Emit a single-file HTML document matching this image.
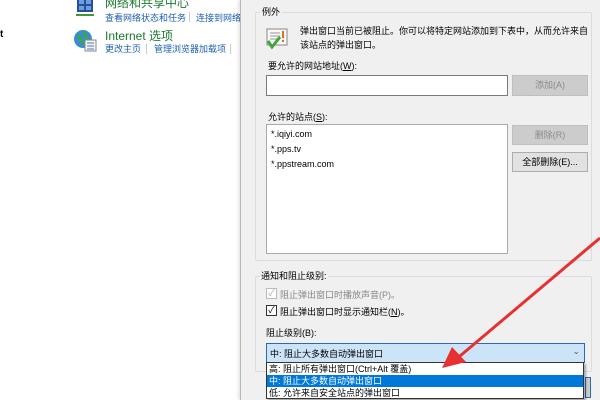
<!DOCTYPE html>
<html><head><meta charset="utf-8"><style>
*{margin:0;padding:0;box-sizing:border-box}
body{width:600px;height:400px;overflow:hidden;background:#fff;position:relative;font-family:"Liberation Sans","Noto Sans CJK SC",sans-serif;font-size:9px;color:#000}
.a{position:absolute;white-space:nowrap}
.lnk{color:#1e5fb4;font-size:9px}
.grn{color:#1a7a2e;font-size:12px}
.dlg{position:absolute;left:240px;top:0;width:360px;height:400px;background:#f0f0f0;border-left:1px solid #b8b8b8;box-shadow:-2px 0 3px rgba(0,0,0,.1)}
.gb{position:absolute;border:1px solid #dcdcdc;border-radius:2px}
.box{position:absolute;background:#fff;border:1px solid #7a7a7a}
.btn{position:absolute;background:#e1e1e1;border:1px solid #adadad;text-align:center;line-height:18px;font-size:9px}
.dis{background:#cccccc;border-color:#bfbfbf;color:#8a8a8a}
.cb{position:absolute;width:11px;height:11px;border:1px solid #333;background:#fff;font-size:9px;line-height:9px;text-align:center}
</style></head><body>
<svg class="a" style="left:74px;top:-2px" width="22" height="20"><rect x="3" y="0" width="16" height="14" fill="#2a4f9a"/><rect x="5" y="2" width="5" height="4" fill="#6aa0e0"/><rect x="12" y="2" width="5" height="4" fill="#6aa0e0"/><rect x="5" y="8" width="5" height="4" fill="#6aa0e0"/><rect x="12" y="8" width="5" height="4" fill="#6aa0e0"/><path d="M2 17h18" stroke="#3a9a3a" stroke-width="2"/></svg>
<div class="a grn" style="left:105px;top:-6px">网络和共享中心</div>
<div class="a lnk" style="left:105px;top:11px">查看网络状态和任务</div>
<div class="a" style="left:189px;top:12px;width:1px;height:10px;background:#ccc"></div>
<div class="a lnk" style="left:196px;top:11px">连接到网络</div>
<div class="a" style="left:0;top:29px;font-size:10px;font-weight:bold">t</div>
<svg class="a" style="left:73px;top:29px" width="24" height="24"><circle cx="10" cy="10" r="9" fill="#3a8ad8"/><path d="M4 6q6 4 4 10M12 2q-2 6 6 10" stroke="#3aa84a" stroke-width="3" fill="none"/><rect x="12" y="11" width="11" height="11" fill="#f4f4f4" stroke="#888"/><path d="M14 14h7M14 17h7M14 20h7" stroke="#4a7ab8"/></svg>
<div class="a grn" style="left:105px;top:27px">Internet 选项</div>
<div class="a lnk" style="left:105px;top:42px">更改主页</div>
<div class="a" style="left:146px;top:44px;width:1px;height:10px;background:#ccc"></div>
<div class="a lnk" style="left:154px;top:42px">管理浏览器加载项</div>
<div class="a" style="left:230px;top:44px;width:1px;height:10px;background:#ccc"></div>
<div class="dlg"></div>
<div class="gb" style="left:255px;top:12px;width:337px;height:249px"></div>
<div class="a" style="left:260px;top:5px;background:#f0f0f0;padding:0 2px">例外</div>
<svg class="a" style="left:265px;top:27px" width="24" height="24"><rect x="2" y="2" width="20" height="16" fill="#f8f8f8" stroke="#888"/><path d="M5 6h10M5 9h10M5 12h8" stroke="#999"/><rect x="17" y="4" width="2" height="7" fill="#e07010"/><rect x="17" y="13" width="2" height="2" fill="#e07010"/><path d="M3 14l4 6 8-10" stroke="#3aa83a" stroke-width="3" fill="none"/></svg>
<div class="a" style="left:300px;top:24px;line-height:14px">弹出窗口当前已被阻止。你可以将特定网站添加到下表中，从而允许来自<br>该站点的弹出窗口。</div>
<div class="a" style="left:268px;top:59px">要允许的网站地址(<u>W</u>):</div>
<div class="box" style="left:266px;top:75px;width:242px;height:21px"></div>
<div class="btn dis" style="left:512px;top:75px;width:76px;height:21px">添加(A)</div>
<div class="a" style="left:268px;top:110px">允许的站点(<u>S</u>):</div>
<div class="box" style="left:266px;top:124px;width:242px;height:130px;border-color:#aaa"></div>
<div class="a" style="left:271px;top:127px;line-height:15px">*.iqiyi.com<br>*.pps.tv<br>*.ppstream.com</div>
<div class="btn dis" style="left:512px;top:125px;width:76px;height:20px">删除(R)</div>
<div class="btn" style="left:512px;top:152px;width:76px;height:20px">全部删除(E)...</div>
<div class="gb" style="left:255px;top:276px;width:337px;height:96px"></div>
<div class="a" style="left:260px;top:269px;background:#f0f0f0;padding:0 1px">通知和阻止级别:</div>
<div class="cb" style="left:266px;top:288px;border-color:#bbb;color:#aaa">✓</div>
<div class="a" style="left:280px;top:288px;color:#888">阻止弹出窗口时播放声音(P)。</div>
<div class="cb" style="left:266px;top:305px">✓</div>
<div class="a" style="left:280px;top:305px">阻止弹出窗口时显示通知栏(<u>N</u>)。</div>
<div class="a" style="left:266px;top:326px">阻止级别(B):</div>
<div class="a" style="left:266px;top:343px;width:319px;height:20px;background:#cce4f7;border:1px solid #2a6ab8;padding:3px 0 0 3px">中: 阻止大多数自动弹出窗口<span style="position:absolute;right:4px;top:2px;color:#555">⌄</span></div>
<div class="a" style="left:585px;top:377px;width:6px;height:21px;background:#ccc;border:1px solid #2a6ab8"></div>
<div class="a" style="left:266px;top:362px;width:318px;height:37px;background:#fff;border:1px solid #333;box-shadow:2px 2px 2px rgba(0,0,0,.3)">
<div style="height:12px;line-height:12px;padding-left:2px">高: 阻止所有弹出窗口(Ctrl+Alt 覆盖)</div>
<div style="height:12px;line-height:12px;padding-left:2px;background:#0078d7;color:#fff">中: 阻止大多数自动弹出窗口</div>
<div style="height:12px;line-height:12px;padding-left:2px">低: 允许来自安全站点的弹出窗口</div>
</div>
<svg class="a" style="left:0;top:0" width="600" height="400"><path d="M600 238L460 356" stroke="#e83030" stroke-width="3"/><polygon points="442,368 452,347 466,362" fill="#e83030"/></svg>
</body></html>
